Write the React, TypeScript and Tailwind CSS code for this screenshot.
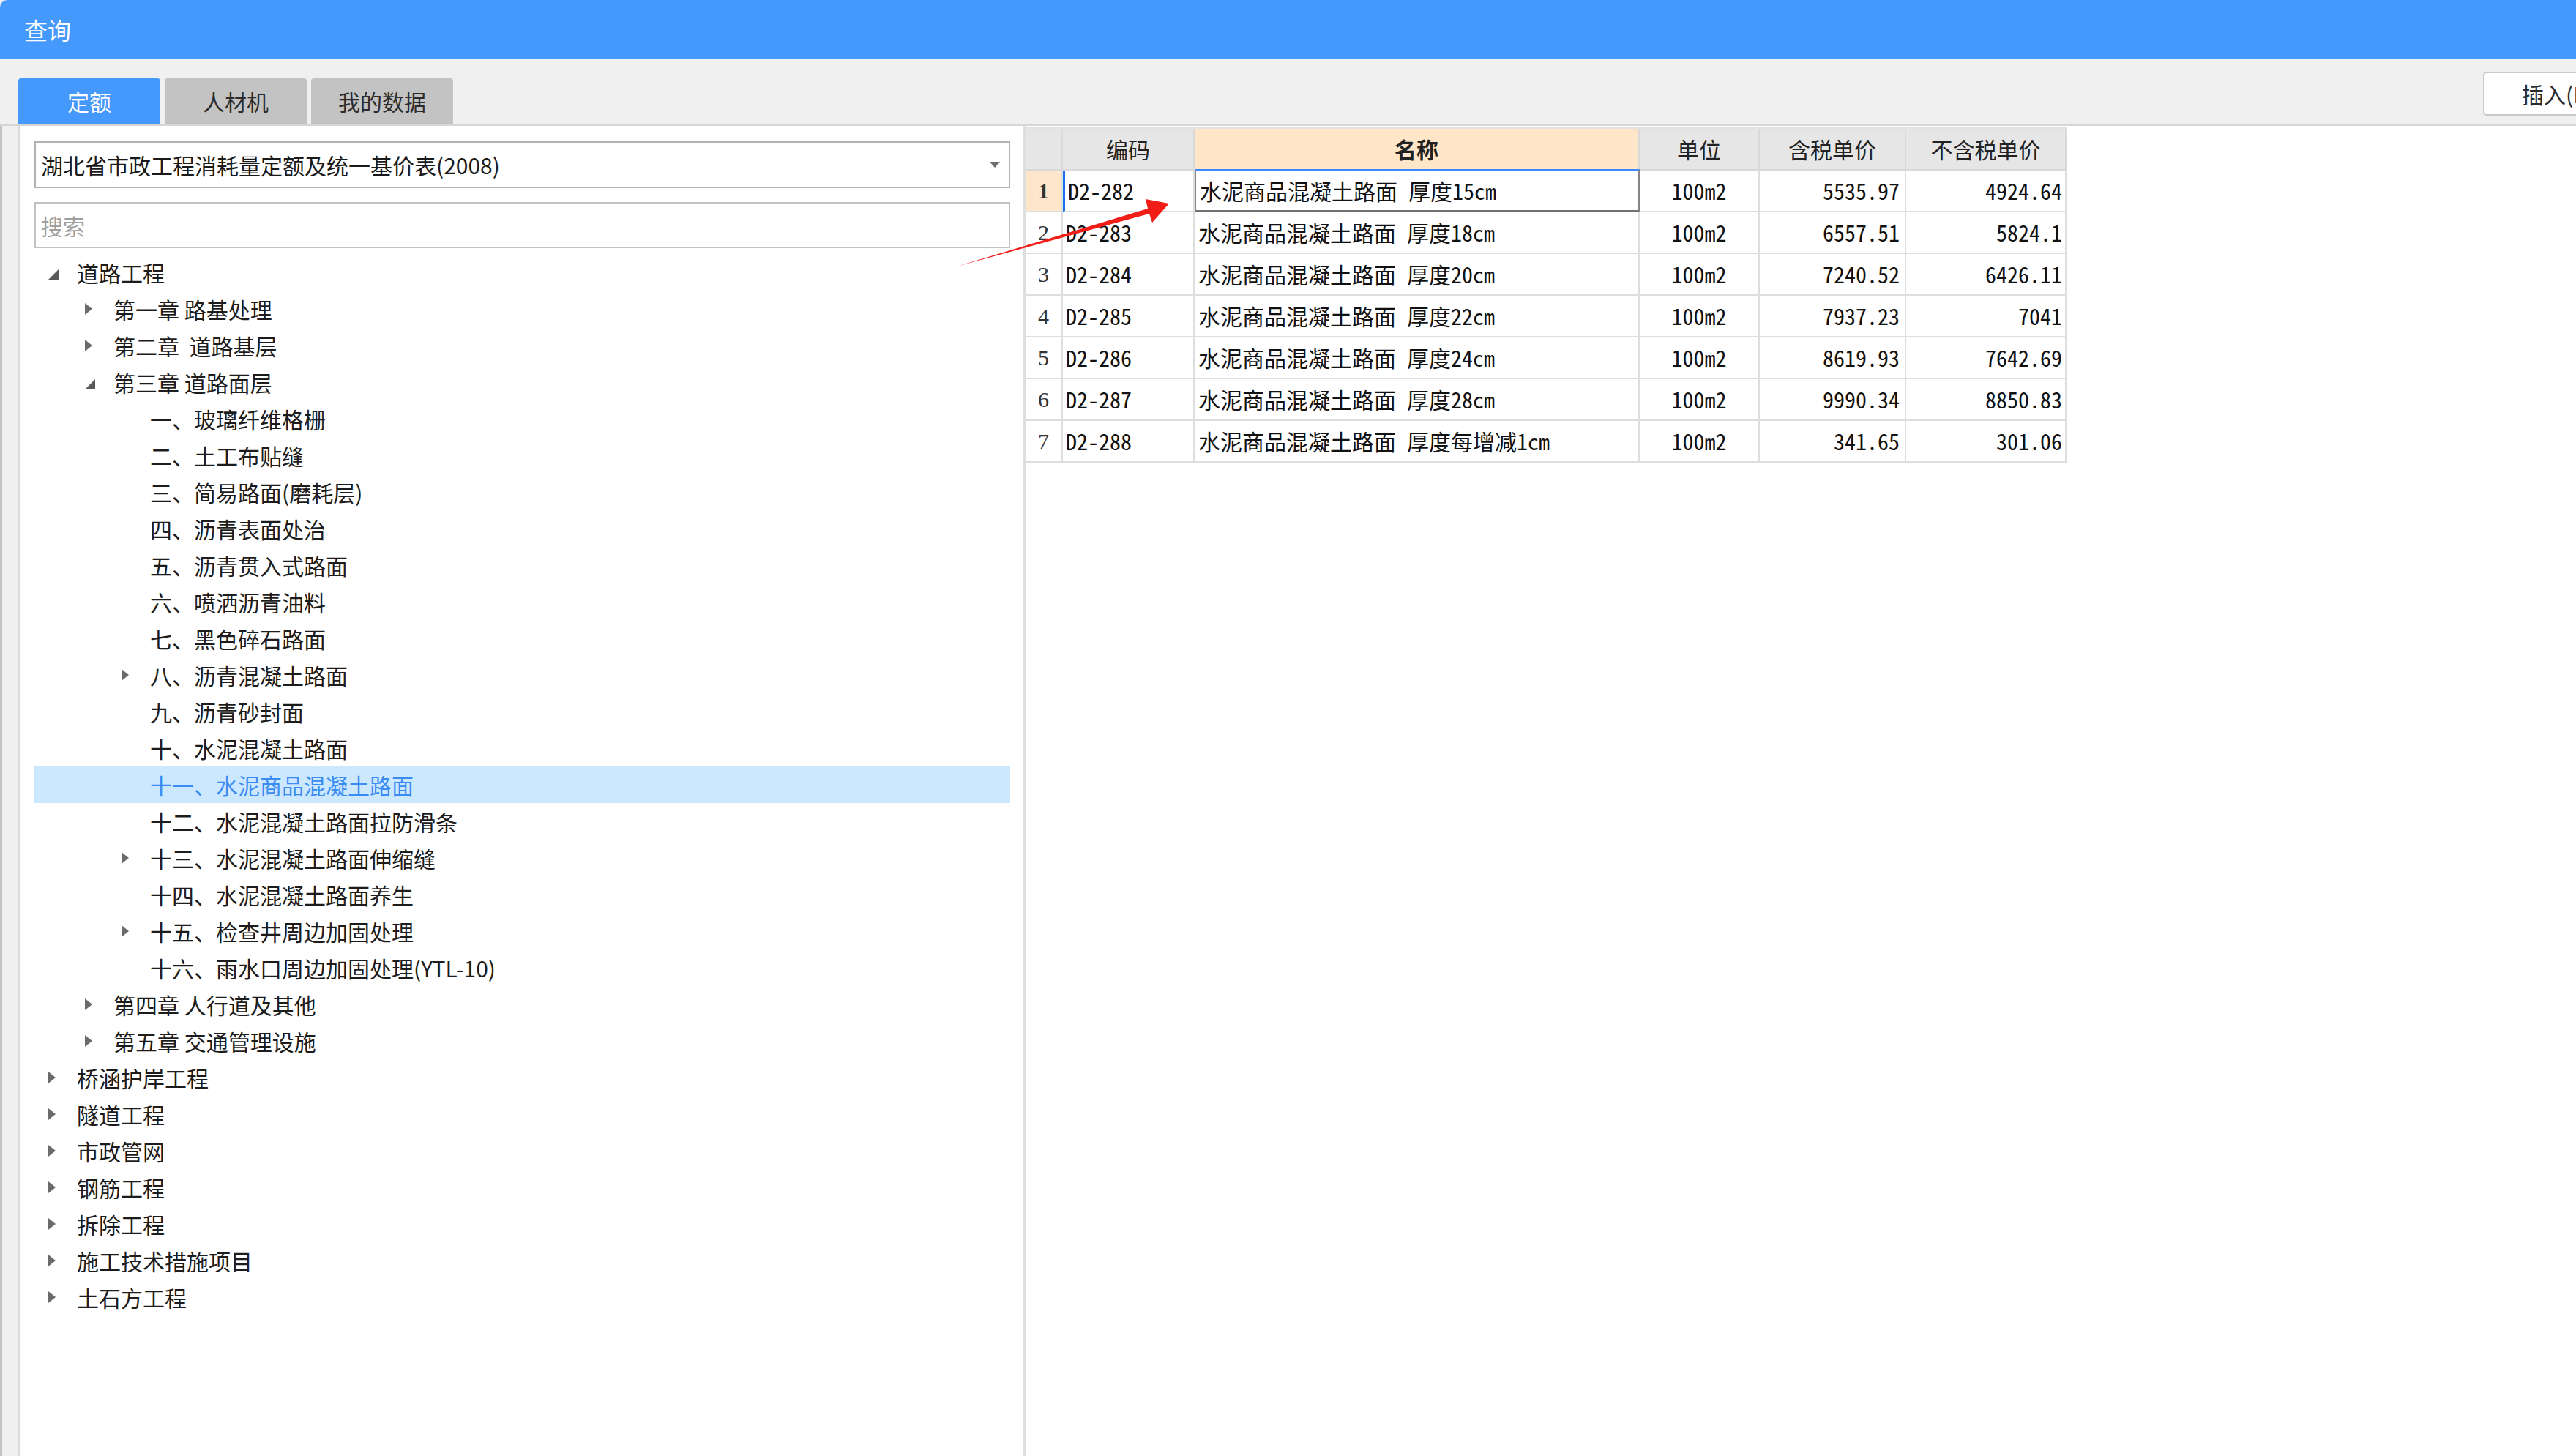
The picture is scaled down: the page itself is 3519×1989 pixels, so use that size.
import React from 'react';

/**
 * 查询 window
 * Quota library tree on the left, quota item table on the right
 */

type Node = {
  label: string;
  level: number;
  arrow?: 'open' | 'closed';
  selected?: boolean;
};

const tree: Node[] = [
  { label: '道路工程', level: 0, arrow: 'open' },
  { label: '第一章 路基处理', level: 1, arrow: 'closed' },
  { label: '第二章  道路基层', level: 1, arrow: 'closed' },
  { label: '第三章 道路面层', level: 1, arrow: 'open' },
  { label: '一、玻璃纤维格栅', level: 2 },
  { label: '二、土工布贴缝', level: 2 },
  { label: '三、简易路面(磨耗层)', level: 2 },
  { label: '四、沥青表面处治', level: 2 },
  { label: '五、沥青贯入式路面', level: 2 },
  { label: '六、喷洒沥青油料', level: 2 },
  { label: '七、黑色碎石路面', level: 2 },
  { label: '八、沥青混凝土路面', level: 2, arrow: 'closed' },
  { label: '九、沥青砂封面', level: 2 },
  { label: '十、水泥混凝土路面', level: 2 },
  { label: '十一、水泥商品混凝土路面', level: 2, selected: true },
  { label: '十二、水泥混凝土路面拉防滑条', level: 2 },
  { label: '十三、水泥混凝土路面伸缩缝', level: 2, arrow: 'closed' },
  { label: '十四、水泥混凝土路面养生', level: 2 },
  { label: '十五、检查井周边加固处理', level: 2, arrow: 'closed' },
  { label: '十六、雨水口周边加固处理(YTL-10)', level: 2 },
  { label: '第四章 人行道及其他', level: 1, arrow: 'closed' },
  { label: '第五章 交通管理设施', level: 1, arrow: 'closed' },
  { label: '桥涵护岸工程', level: 0, arrow: 'closed' },
  { label: '隧道工程', level: 0, arrow: 'closed' },
  { label: '市政管网', level: 0, arrow: 'closed' },
  { label: '钢筋工程', level: 0, arrow: 'closed' },
  { label: '拆除工程', level: 0, arrow: 'closed' },
  { label: '施工技术措施项目', level: 0, arrow: 'closed' },
  { label: '土石方工程', level: 0, arrow: 'closed' },
];

const rows = [
  ['D2-282', '水泥商品混凝土路面 厚度15cm', '100m2', '5535.97', '4924.64'],
  ['D2-283', '水泥商品混凝土路面 厚度18cm', '100m2', '6557.51', '5824.1'],
  ['D2-284', '水泥商品混凝土路面 厚度20cm', '100m2', '7240.52', '6426.11'],
  ['D2-285', '水泥商品混凝土路面 厚度22cm', '100m2', '7937.23', '7041'],
  ['D2-286', '水泥商品混凝土路面 厚度24cm', '100m2', '8619.93', '7642.69'],
  ['D2-287', '水泥商品混凝土路面 厚度28cm', '100m2', '9990.34', '8850.83'],
  ['D2-288', '水泥商品混凝土路面 厚度每增减1cm', '100m2', '341.65', '301.06'],
];

const indent = ['pl-[18px]', 'pl-[68px]', 'pl-[118px]'];

function Arrow({ kind }: { kind?: 'open' | 'closed' }) {
  return (
    <span className="w-[40px] h-[50px] flex items-center shrink-0">
      {kind === 'open' && (
        <svg width="16" height="16" viewBox="0 0 16 16" className="mt-[6px]">
          <polygon points="15,1 15,15 1,15" fill="#5a5a5a" />
        </svg>
      )}
      {kind === 'closed' && (
        <svg width="12" height="18" viewBox="0 0 12 18">
          <polygon points="1,1 11,9 1,17" fill="#6b6b6b" />
        </svg>
      )}
    </span>
  );
}

function TreeRow({ node }: { node: Node }) {
  return (
    <div
      className={`h-[50px] flex items-center ${indent[node.level]} ${
        node.selected ? 'bg-[#cce8ff] text-[#3a8cf2]' : 'text-[#1c1c1c]'
      }`}
    >
      <Arrow kind={node.arrow} />
      <span className="text-[30px] leading-none whitespace-pre">{node.label}</span>
    </div>
  );
}

const headCell = 'h-[57px] flex items-center justify-center border-r-2 border-b-2 border-[#d9d9d9] text-[30px] text-[#222]';
const cell = 'h-[57px] flex items-center border-r-2 border-b-2 border-[#dedede] text-[30px] text-[#111]';

export default function App() {
  return (
    <div className="relative w-[3519px] h-[1989px] overflow-hidden bg-[#f0f0f0] font-['Noto_Sans_CJK_SC',sans-serif]">
      {/* Title bar */}
      <div className="h-[80px] bg-[#4598fc] rounded-tl-[10px] flex items-center pl-[33px]">
        <span className="text-white text-[32px] leading-none">查询</span>
      </div>

      {/* Tabs + insert button */}
      <div className="h-[92px] flex items-start border-b-2 border-[#d6d6d6] pl-[25px]">
        <div className="flex gap-[6px] self-end">
          <div className="w-[194px] h-[63px] rounded-t-[4px] bg-[#4598fc] text-white text-[30px] flex items-center justify-center">
            定额
          </div>
          <div className="w-[194px] h-[63px] rounded-t-[4px] bg-[#c3c3c3] text-[#2b2b2b] text-[30px] flex items-center justify-center">
            人材机
          </div>
          <div className="w-[194px] h-[63px] rounded-t-[4px] bg-[#c3c3c3] text-[#2b2b2b] text-[30px] flex items-center justify-center">
            我的数据
          </div>
        </div>
        <button className="ml-auto -mr-[73px] mt-[18px] w-[200px] h-[60px] shrink-0 rounded-[5px] border-2 border-[#c9c9c9] bg-white text-[30px] text-[#2b2b2b] text-left pl-[51px]">
          插入(I)
        </button>
      </div>

      {/* Body */}
      <div className="flex h-[1817px]">
        <div className="w-[25px] shrink-0 border-l-[3px] border-[#c4c4c4]" />

        {/* Left: library + tree */}
        <div className="w-[1373px] shrink-0 bg-white border-l-2 border-[#dcdcdc] pl-[20px] pr-[18px] pt-[21px]">
          <div className="h-[64px] border-2 border-[#b3b3b3] flex items-center pl-[7px] pr-[12px]">
            <span className="flex-1 text-[30px] leading-none text-[#1a1a1a]">
              湖北省市政工程消耗量定额及统一基价表(2008)
            </span>
            <svg width="14" height="8" viewBox="0 0 14 8">
              <polygon points="0,0 14,0 7,8" fill="#6e6e6e" />
            </svg>
          </div>
          <div className="mt-[19px] h-[63px] border-2 border-[#c2c2c2] flex items-center pl-[7px]">
            <span className="text-[30px] leading-none text-[#a0a0a0]">搜索</span>
          </div>
          <div className="mt-[8px]">
            {tree.map((n, i) => (
              <TreeRow key={i} node={n} />
            ))}
          </div>
        </div>

        <div className="w-[3px] shrink-0 bg-[#dedede]" />

        {/* Right: quota table */}
        <div className="flex-1 bg-white pt-[2px]">
          <div className="grid grid-cols-[51px_180px_608px_164px_200px_219px] w-[1422px] border-t-2 border-[#e2e2e2]">
            <div className={`${headCell} bg-[#e6e6e6]`} />
            <div className={`${headCell} bg-[#e6e6e6]`}>编码</div>
            <div className={`${headCell} bg-[#ffe6c9] font-bold`}>名称</div>
            <div className={`${headCell} bg-[#e6e6e6]`}>单位</div>
            <div className={`${headCell} bg-[#e6e6e6]`}>含税单价</div>
            <div className={`${headCell} bg-[#e6e6e6]`}>不含税单价</div>

            {rows.map((r, i) => {
              const first = i === 0;
              return (
                <React.Fragment key={r[0]}>
                  <div
                    className={`${cell} justify-center font-['Liberation_Serif',serif] text-[28px] text-[#333] ${
                      first ? 'bg-[#fde6c9] font-bold text-[#111]' : 'bg-white'
                    }`}
                  >
                    {i + 1}
                  </div>
                  <div
                    className={`${cell} pl-[4px] font-['Noto_Sans_Mono_CJK_SC','Liberation_Mono',monospace] ${
                      first ? 'border-l-[3px] border-l-[#1d6ff2]' : ''
                    }`}
                  >
                    {r[0]}
                  </div>
                  <div
                    className={`${cell} pl-[5px] whitespace-pre font-['Noto_Sans_Mono_CJK_SC','Noto_Sans_CJK_SC',monospace] ${
                      first ? 'border-t-2 border-t-[#3d8bfd] border-l-2 border-l-[#858585] border-r-[#858585] border-b-[3px] border-b-[#707070] -mt-[2px] h-[59px]' : ''
                    }`}
                  >
                    {r[1]}
                  </div>
                  <div className={`${cell} justify-center font-['Noto_Sans_Mono_CJK_SC','Liberation_Mono',monospace]`}>
                    {r[2]}
                  </div>
                  <div className={`${cell} justify-end pr-[7px] font-['Noto_Sans_Mono_CJK_SC','Liberation_Mono',monospace]`}>
                    {r[3]}
                  </div>
                  <div className={`${cell} justify-end pr-[4px] font-['Noto_Sans_Mono_CJK_SC','Liberation_Mono',monospace]`}>
                    {r[4]}
                  </div>
                </React.Fragment>
              );
            })}
          </div>
        </div>
      </div>

      {/* Red annotation arrow */}
      <svg
        className="absolute inset-0 pointer-events-none"
        width="3519"
        height="1989"
        viewBox="0 0 3519 1989"
      >
        <polygon
          points="1307,364 1568,285 1565,272 1597,278 1574,304 1570,292"
          fill="#f21d16"
        />
      </svg>
    </div>
  );
}
